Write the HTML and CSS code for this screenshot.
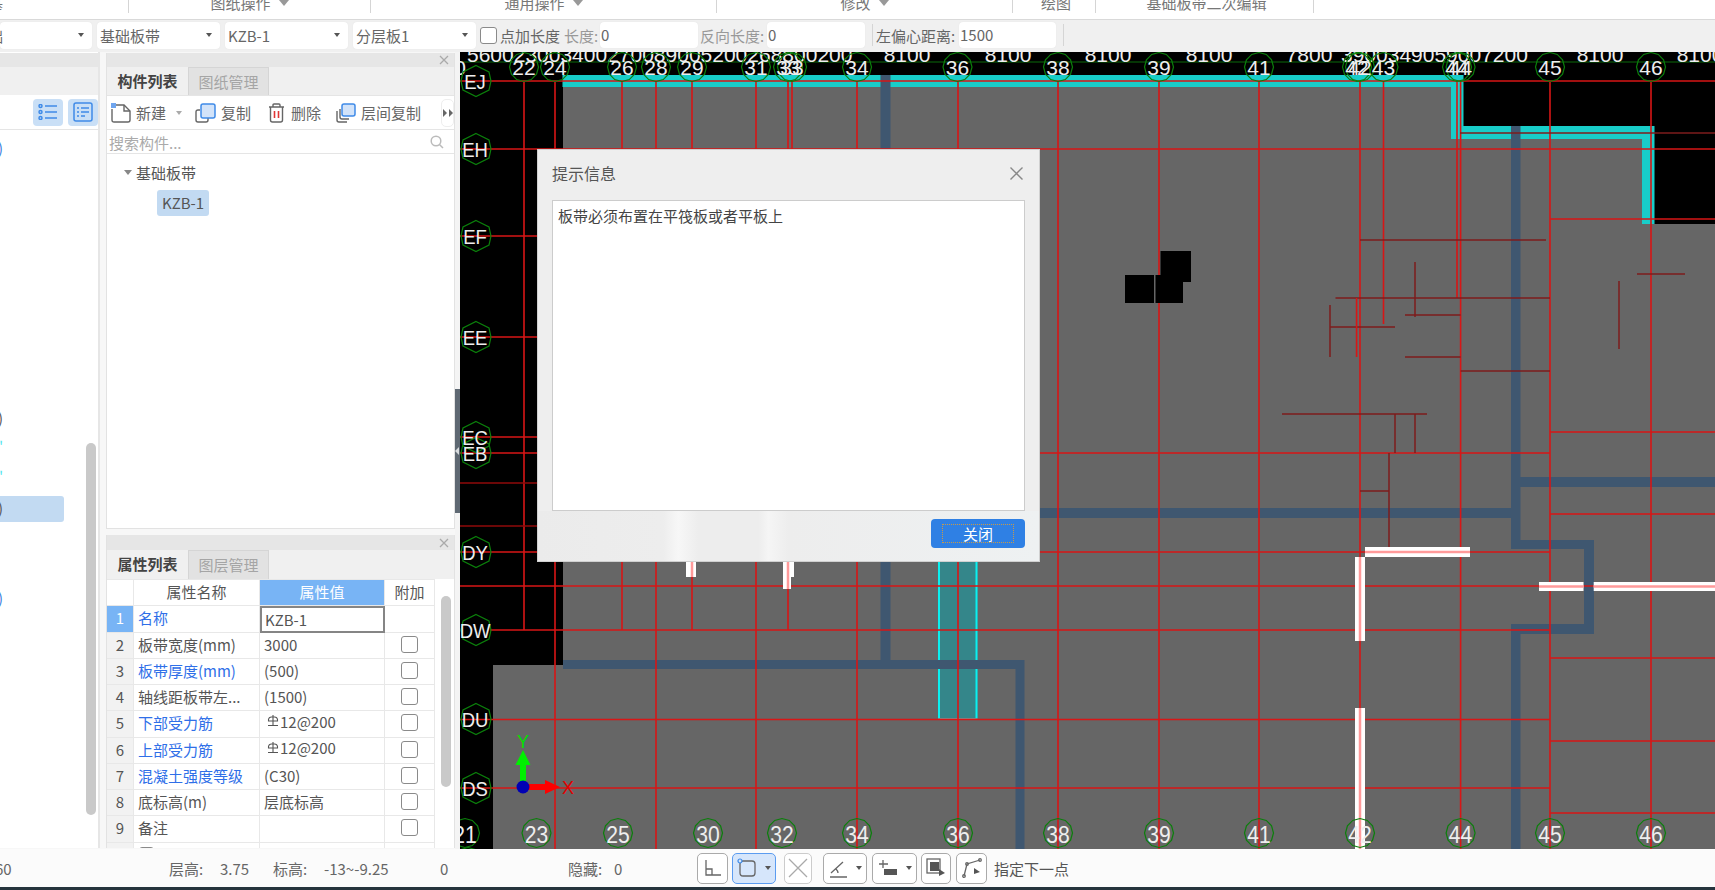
FILE: index.html
```html
<!DOCTYPE html>
<html lang="zh-CN">
<head>
<meta charset="utf-8">
<title>基础板带</title>
<link rel="stylesheet" href="styles.css">
</head>
<body>
<div class="app">
  <header class="ribbon">
    <div class="rb rb-1"><span class="rb-clip">基</span></div>
    <div class="rb rb-2"><span>图纸操作</span><i class="rb-tri"></i></div>
    <div class="rb rb-3"><span>通用操作</span><i class="rb-tri"></i></div>
    <div class="rb rb-4"><span>修改</span><i class="rb-tri"></i></div>
    <div class="rb rb-5"><span>绘图</span></div>
    <div class="rb rb-6"><span>基础板带二次编辑</span></div>
  </header>

  <div class="toolbar">
    <div class="sel sel-first"><span class="sel-clip">础</span><i class="tri"></i></div>
    <div class="sel"><span>基础板带</span><i class="tri"></i></div>
    <div class="sel"><span>KZB-1</span><i class="tri"></i></div>
    <div class="sel"><span>分层板1</span><i class="tri"></i></div>
    <span class="cb tb-cb"></span>
    <span class="tb-label tl-a">点加长度</span>
    <span class="tb-label muted tl-b">长度:</span>
    <div class="inp">0</div>
    <span class="tb-label muted tl-c">反向长度:</span>
    <div class="inp">0</div>
    <i class="tb-sep"></i>
    <span class="tb-label tl-d">左偏心距离:</span>
    <div class="inp inp-last">1500</div>
    <i class="tb-sep"></i>
  </div>

  <main class="main">
    <aside class="left">
      <div class="p-head"></div>
      <div class="p-tabs"></div>
      <div class="left-tools">
        <span class="view-btn">
          <svg width="20" height="16" viewBox="0 0 20 16"><g class="ic-blue"><circle cx="2.5" cy="2" r="1.5"/><circle cx="2.5" cy="8" r="1.5"/><circle cx="2.5" cy="14" r="1.5"/><path d="M7 2H19M7 8H19M7 14H19"/></g></svg>
        </span>
        <span class="view-btn">
          <svg width="20" height="20" viewBox="0 0 20 20"><g class="ic-blue"><rect x="1" y="1" width="18" height="18" rx="2"/><path d="M4 6H6M8 6H16M4 10H6M8 10H16M4 14H6M8 14H12"/></g></svg>
        </span>
      </div>
      <div class="left-list">
        <div class="lrow"><span class="frag frag-blue">)</span></div>
        <div class="lrow"></div><div class="lrow"></div><div class="lrow"></div><div class="lrow"></div>
        <div class="lrow"></div><div class="lrow"></div><div class="lrow"></div><div class="lrow"></div>
        <div class="lrow"><span class="frag">)</span></div>
        <div class="lrow"><span class="frag frag-cyan">'</span></div>
        <div class="lrow"><span class="frag frag-cyan">'</span></div>
        <div class="lrow lrow-sel"><span class="frag">)</span></div>
        <div class="lrow"></div><div class="lrow"></div>
        <div class="lrow"><span class="frag frag-blue">)</span></div>
      </div>
      <div class="left-scroll"></div>
    </aside>

    <section class="mid">
      <div class="panel panel-top">
        <div class="p-head"><svg class="p-x" width="10" height="10" viewBox="0 0 10 10"><path d="M1 1L9 9M9 1L1 9"/></svg></div>
        <div class="p-tabs">
          <span class="tab tab-on">构件列表</span>
          <span class="tab tab-off">图纸管理</span>
        </div>
        <div class="comp-tools">
          <span class="ct ct-new">
            <svg width="20" height="20" viewBox="0 0 20 20"><path class="ic-line" d="M5 2H13L19 8V17Q19 19 17 19H3Q1 19 1 17V6"/><path class="ic-line" d="M13 2V8H19"/><rect class="ic-fill" x="0" y="0" width="5" height="5"/></svg>
            <span>新建</span><i class="tri tri-light"></i>
          </span>
          <span class="ct ct-copy">
            <svg width="21" height="20" viewBox="0 0 21 20"><path class="ic-line" d="M5 7H3Q1 7 1 9V17Q1 19 3 19H11Q13 19 13 17V15"/><rect class="ic-sel" x="6" y="1" width="14" height="14" rx="2"/></svg>
            <span>复制</span>
          </span>
          <span class="ct ct-del">
            <svg width="17" height="20" viewBox="0 0 17 20"><path class="ic-line" d="M1 4H16M5 4V2Q5 1 6 1H11Q12 1 12 2V4M2.500 4V17Q2.500 19 4.500 19H12.500Q14.500 19 14.500 17V4"/><path class="ic-red" d="M6.500 8V15M10.500 8V15"/></svg>
            <span>删除</span>
          </span>
          <span class="ct ct-layer">
            <svg width="20" height="20" viewBox="0 0 20 20"><path class="ic-line" d="M1 8V17Q1 19 3 19H11M4 6V14Q4 16 6 16H13"/><rect class="ic-sel" x="6" y="1" width="13" height="12" rx="2"/></svg>
            <span>层间复制</span>
          </span>
          <span class="ct-more"><svg width="10" height="8" viewBox="0 0 10 8"><path d="M0 0L4 4L0 8ZM6 0L10 4L6 8Z"/></svg></span>
        </div>
        <div class="search">
          <span>搜索构件...</span>
          <svg width="14" height="14" viewBox="0 0 14 14"><circle class="ic-lite" cx="6" cy="6" r="4.800"/><path class="ic-lite" d="M9.500 9.500L13 13"/></svg>
        </div>
        <div class="tree">
          <div class="tree-root"><i class="tri tri-tree"></i><span>基础板带</span></div>
          <div class="tree-leaf">KZB-1</div>
        </div>
      </div>

      <div class="panel panel-bottom">
        <div class="p-head"><svg class="p-x" width="10" height="10" viewBox="0 0 10 10"><path d="M1 1L9 9M9 1L1 9"/></svg></div>
        <div class="p-tabs">
          <span class="tab tab-on">属性列表</span>
          <span class="tab tab-off">图层管理</span>
        </div>
        <div class="ptable">
          <div class="c c-h"></div><div class="c c-h">属性名称</div><div class="c c-h c-hv">属性值</div><div class="c c-h">附加</div>

          <div class="c c-n c-n-on">1</div><div class="c c-name link">名称</div><div class="c c-val c-edit">KZB-1</div><div class="c"></div>
          <div class="c c-n">2</div><div class="c c-name">板带宽度(mm)</div><div class="c c-val">3000</div><div class="c c-ck"><span class="cb"></span></div>
          <div class="c c-n">3</div><div class="c c-name link">板带厚度(mm)</div><div class="c c-val">(500)</div><div class="c c-ck"><span class="cb"></span></div>
          <div class="c c-n">4</div><div class="c c-name">轴线距板带左...</div><div class="c c-val">(1500)</div><div class="c c-ck"><span class="cb"></span></div>
          <div class="c c-n">5</div><div class="c c-name link">下部受力筋</div><div class="c c-val c-bar"><svg width="12" height="12" viewBox="0 0 12 12"><path d="M6 0V10M1 10.500H11M1.500 6V4.500A3 3 0 0 1 4.500 2H7.500A3 3 0 0 1 10.500 4.500V6Z"/></svg><span>12@200</span></div><div class="c c-ck"><span class="cb"></span></div>
          <div class="c c-n">6</div><div class="c c-name link">上部受力筋</div><div class="c c-val c-bar"><svg width="12" height="12" viewBox="0 0 12 12"><path d="M6 0V10M1 10.500H11M1.500 6V4.500A3 3 0 0 1 4.500 2H7.500A3 3 0 0 1 10.500 4.500V6Z"/></svg><span>12@200</span></div><div class="c c-ck"><span class="cb"></span></div>
          <div class="c c-n">7</div><div class="c c-name link">混凝土强度等级</div><div class="c c-val">(C30)</div><div class="c c-ck"><span class="cb"></span></div>
          <div class="c c-n">8</div><div class="c c-name">底标高(m)</div><div class="c c-val">层底标高</div><div class="c c-ck"><span class="cb"></span></div>
          <div class="c c-n">9</div><div class="c c-name">备注</div><div class="c c-val"></div><div class="c c-ck"><span class="cb"></span></div>
          <div class="c c-n"></div><div class="c c-name c-top"><span class="cb cb-small"></span></div><div class="c"></div><div class="c"></div>
        </div>
        <div class="p-scroll"></div>
      </div>
    </section>

    <div class="splitter"><span class="split-handle"><i></i></span></div>

    <section class="canvas">
      <svg class="cad" viewBox="460 52 1255 797" width="1255" height="797">
        <defs>
          <polygon id="c12" class="ring" points="14.500,0 12.560,7.250 7.250,12.560 0,14.500 -7.250,12.560 -12.560,7.250 -14.500,0 -12.560,-7.250 -7.250,-12.560 0,-14.500 7.250,-12.560 12.560,-7.250"/>
          <polygon id="hex" class="ring" points="0,-15.500 13,-9 15,0 13,9 0,15.500 -13,9 -15,0 -13,-9"/>
        </defs>

        <rect class="bk" x="460" y="52" width="1255" height="797"/>
        <path class="gray" d="M563 87H1451V139H1642V224H1715V849H493V665H563Z"/>

        <path class="cyan" d="M562.500 75H1463.500V126H1654.500V224H1642V139H1451V87H562.500Z"/>

        <path class="wall" d="M880.500 75H890.500V660H1024.500V849H1015.500V669H563V660H880.500Z"/>
        <path class="wall" d="M1511 126H1520.500V477H1715V487H1520.500V540H1594V634H1520.500V849H1511V624H1584V549H1511V518H1040V508H1511Z"/>

        <rect class="slab" x="938" y="540" width="39.500" height="120"/>
        <rect class="slab" x="938" y="669" width="39.500" height="50"/>
        <path class="slab-edge" d="M939 540V660M939 669V718M976.500 540V660M976.500 669V718"/>
        <path class="slab-foot" d="M938 719H977.500"/>

        <path class="red" d="M524 81V630M555 81V849M622 81V630M656 81V849M692 81V630M756 81V849M788 81V630M792 81V149M857 81V849M958 81V849M1058 81V849M1159 81V849M1259 81V849M1360 81V849M1383.500 81V324M1457 81V298M1460.600 81V849M1550 81V849M1651 81V849"/>
        <path class="red" d="M460 81H1715M460 149H1715M460 236H540M460 337H540M460 437H540M460 453H1550M460 552H1550M460 586H1715M490 630H1550M460 719.500H1550M460 788H1550M1550 219H1715M1550 432H1715M1550 514H1715M1550 658H1715M1550 741H1715M1550 813H1715"/>
        <path class="red-dim" d="M460 483H540M460 526H540"/>
        <path class="dim" d="M1360 240H1546M1335.500 298H1550M1415 262V317M1405 315H1460.600M1330 305V357M1330 327H1395M1405 357H1460.600M1460.600 371H1550M1282 414H1427M1395 414V453M1415 414V453M1389 453V552M1360 491H1389M1637 274H1685M1619 281V349M1460 133H1715"/>
        <path class="red" d="M1356.600 298V357"/>

        <path class="blk" d="M1160.500 251H1191V282H1183V303H1155.500V275H1160.500ZM1125 275H1154V303H1125Z"/>

        <path class="white" d="M1365 547H1470V557H1365ZM1355 557H1365V641H1355ZM1355 708H1365V849H1355ZM1539 582H1583.500V591H1539ZM1593.700 582H1715V591H1593.700ZM686 560H696V577H686ZM783 560H794V577H791V589H783Z"/>
        <path class="pink" d="M1365 552H1470M1360 557V641M1360 708V849M1539 586.500H1583.500M1593.700 586.500H1715M692 560V577M788 560V589"/>

        <path class="dimline" d="M460 62H1715"/>
        <text class="t dimt" x="467" y="61.500">560023003400270089005200268800200</text>
        <text class="t dimt mid-a" x="907" y="61.500">8100</text>
        <text class="t dimt mid-a" x="1008" y="61.500">8100</text>
        <text class="t dimt mid-a" x="1108" y="61.500">8100</text>
        <text class="t dimt mid-a" x="1209" y="61.500">8100</text>
        <text class="t dimt mid-a" x="1309" y="61.500">7800</text>
        <text class="t dimt" x="1341" y="61.500">3900349059007200</text>
        <text class="t dimt mid-a" x="1600" y="61.500">8100</text>
        <text class="t dimt mid-a" x="1700" y="61.500">8100</text>

        <use href="#c12" x="524" y="67"/><use href="#c12" x="555" y="67"/><use href="#c12" x="622" y="67"/><use href="#c12" x="656" y="67"/><use href="#c12" x="692" y="67"/><use href="#c12" x="756" y="67"/><use href="#c12" x="788" y="67"/><use href="#c12" x="792" y="67"/><use href="#c12" x="857" y="67"/><use href="#c12" x="957.500" y="67"/><use href="#c12" x="1058" y="67"/><use href="#c12" x="1159" y="67"/><use href="#c12" x="1259" y="67"/><use href="#c12" x="1357" y="67"/><use href="#c12" x="1360" y="67"/><use href="#c12" x="1383.500" y="67"/><use href="#c12" x="1457" y="67"/><use href="#c12" x="1460.600" y="67"/><use href="#c12" x="1550" y="67"/><use href="#c12" x="1651" y="67"/>
        <g class="t axt">
          <text x="460" y="74.500">0</text><text x="524" y="75">22</text><text x="555" y="75">24</text><text x="622" y="75">26</text><text x="656" y="75">28</text><text x="692" y="75">29</text><text x="756" y="75">31</text><text x="788" y="75">33</text><text x="792" y="75">33</text><text x="857" y="75">34</text><text x="957.500" y="75">36</text><text x="1058" y="75">38</text><text x="1159" y="75">39</text><text x="1259" y="75">41</text><text x="1357" y="75">42</text><text x="1360" y="75">42</text><text x="1383.500" y="75">43</text><text x="1457" y="75">44</text><text x="1460.600" y="75">44</text><text x="1550" y="75">45</text><text x="1651" y="75">46</text>
        </g>

        <use href="#hex" x="476" y="81"/><use href="#hex" x="476" y="149"/><use href="#hex" x="476" y="236"/><use href="#hex" x="476" y="337"/><use href="#hex" x="476" y="437"/><use href="#hex" x="476" y="453"/><use href="#hex" x="476" y="552"/><use href="#hex" x="476" y="630"/><use href="#hex" x="476" y="719"/><use href="#hex" x="476" y="788"/>
        <g class="t axl">
          <text x="475" y="89">EJ</text><text x="475" y="157">EH</text><text x="475" y="244">EF</text><text x="475" y="345">EE</text><text x="475" y="445">EC</text><text x="475" y="461">EB</text><text x="475" y="560">DY</text><text x="475" y="638">DW</text><text x="475" y="727">DU</text><text x="475" y="796">DS</text>
        </g>

        <use href="#c12" x="465" y="833"/><use href="#c12" x="536.500" y="833"/><use href="#c12" x="618" y="833"/><use href="#c12" x="708" y="833"/><use href="#c12" x="782" y="833"/><use href="#c12" x="857" y="833"/><use href="#c12" x="958" y="833"/><use href="#c12" x="1058" y="833"/><use href="#c12" x="1159" y="833"/><use href="#c12" x="1259" y="833"/><use href="#c12" x="1360" y="833"/><use href="#c12" x="1460.600" y="833"/><use href="#c12" x="1550" y="833"/><use href="#c12" x="1651" y="833"/><use href="#c12" x="468" y="862"/>
        <g class="t axb">
          <text x="465" y="843">21</text><text x="536.500" y="843">23</text><text x="618" y="843">25</text><text x="708" y="843">30</text><text x="782" y="843">32</text><text x="857" y="843">34</text><text x="958" y="843">36</text><text x="1058" y="843">38</text><text x="1159" y="843">39</text><text x="1259" y="843">41</text><text x="1360" y="843">42</text><text x="1460.600" y="843">44</text><text x="1550" y="843">45</text><text x="1651" y="843">46</text>
        </g>

        <path class="g-green" d="M520 787V765H515.500L523 750L530.500 765H526V787Z"/>
        <path class="g-red" d="M523 784H545V780L560 787L545 794V790H523Z"/>
        <circle class="g-blue" cx="523" cy="787" r="6.500"/>
        <text class="t g-y" x="523" y="748">Y</text>
        <text class="t g-x" x="568" y="794">X</text>
      </svg>

      <div class="dialog">
        <div class="dlg-title">
          <span>提示信息</span>
          <svg width="15" height="15" viewBox="0 0 15 15"><path d="M1.500 1.500L13.500 13.500M13.500 1.500L1.500 13.500"/></svg>
        </div>
        <div class="dlg-box">板带必须布置在平筏板或者平板上</div>
        <div class="dlg-foot">
          <button class="dlg-btn" type="button"><span>关闭</span></button>
        </div>
      </div>
    </section>
  </main>

  <footer class="status">
    <span class="st st-0"><span class="st-clip">60</span></span>
    <span class="st st-1">层高:</span>
    <span class="st st-2">3.75</span>
    <span class="st st-1">标高:</span>
    <span class="st st-3">-13~-9.25</span>
    <span class="st st-4">0</span>
    <span class="st st-5">隐藏:</span>
    <span class="st st-6">0</span>
    <span class="sb sb-1"><svg width="18" height="18" viewBox="0 0 18 18"><path class="ic-dark" d="M2 1V16H17M2 10H8V16"/></svg></span>
    <span class="sb sb-2"><svg class="sb-ic" width="20" height="20" viewBox="0 0 20 20"><rect class="ic-dark" x="3" y="3" width="15" height="15" rx="3"/><circle class="ic-dot" cx="3" cy="3" r="2"/></svg><i class="tri tri-dark"></i></span>
    <span class="sb sb-3"><svg width="20" height="20" viewBox="0 0 20 20"><path class="ic-soft" d="M1 1L19 19M19 1L1 19"/></svg></span>
    <span class="sb sb-4"><svg width="20" height="20" viewBox="0 0 20 20"><path class="ic-dark" d="M3 15L15 4M2 19H19M8 11Q10 13 10 15"/></svg><i class="tri tri-dark"></i></span>
    <span class="sb sb-5"><svg width="20" height="18" viewBox="0 0 20 18"><path class="ic-dark" d="M1 5H10M5 1V9"/><rect class="ic-solid" x="6" y="10" width="13" height="6"/></svg><i class="tri tri-dark"></i></span>
    <span class="sb sb-6"><svg width="20" height="20" viewBox="0 0 20 20"><rect class="ic-dark" x="1" y="1" width="13" height="14"/><rect class="ic-solid" x="4" y="4" width="9" height="9"/><path class="ic-solid" d="M13 11L19 15L13 18Z"/></svg></span>
    <span class="sb sb-7"><svg width="20" height="20" viewBox="0 0 20 20"><path class="ic-dark" d="M2 18L5 6L18 2"/><circle class="ic-dark" cx="2" cy="18" r="1.300"/><circle class="ic-dark" cx="5" cy="6" r="1.300"/><circle class="ic-dark" cx="18" cy="2" r="1.300"/><path class="ic-solid" d="M12 10L18 14L12 16Z"/></svg></span>
    <span class="st st-hint">指定下一点</span>
  </footer>
  <div class="taskbar"></div>
</div>
</body>
</html>
```

FILE: styles.css
```css
* { box-sizing: border-box; }
html, body { margin: 0; height: 100%; overflow: hidden; }
body {
  font-family: "Noto Sans CJK SC", "Noto Sans", sans-serif;
  font-size: 15px;
  color: #555;
  background: #f0f0f0;
}
i { display: block; font-style: normal; }

.app { width: 1715px; height: 890px; display: flex; flex-direction: column; overflow: hidden; }

/* ribbon */
.ribbon { height: 20px; flex: none; display: flex; background: #fff; border-bottom: 1px solid #d9d9d9; }
.rb {
  height: 13px; flex: none; display: flex; justify-content: center; gap: 8px;
  line-height: 6px; color: #777; border-right: 1px solid #d5d5d5;
}
.rb-1 { width: 129px; justify-content: flex-start; }
.rb-clip { margin-left: -12px; }
.rb-2 { width: 242px; }
.rb-3 { width: 346px; }
.rb-4 { width: 296px; }
.rb-5 { width: 83px; padding-left: 4px; }
.rb-6 { width: 218px; padding-left: 4px; }
.rb-tri { width: 0; height: 0; margin-top: 0; border: 5px solid transparent; border-top: 6px solid #999; border-bottom: 0; }

/* toolbar */
.toolbar { height: 32px; flex: none; display: flex; align-items: center; background: #f0f0f0; padding-bottom: 2px; }
.sel {
  width: 123px; height: 27px; margin-left: 5px; padding: 0 8px 0 3px; flex: none; overflow: hidden;
  display: flex; align-items: center; justify-content: space-between;
  background: #fff; border-radius: 4px; color: #666; box-shadow: 0 0 1px #ddd;
}
.sel-first { width: 92px; margin-left: 0; padding-left: 0; }
.sel-clip { margin-left: -12px; }
.tri { width: 0; height: 0; border: 3.5px solid transparent; border-top: 4px solid #555; border-bottom: 0; }
.cb {
  display: block; width: 17px; height: 17px; flex: none; background: #fff;
  border: 1.5px solid #8a8a8a; border-radius: 3px;
}
.tb-cb { margin-left: 4px; }
.tb-label { flex: none; white-space: nowrap; color: #666; }
.muted { color: #999; }
.tl-a { margin-left: 3px; width: 59px; }
.tl-b { margin-left: 5px; width: 36px; }
.tl-c { margin-left: 2px; width: 67px; }
.tl-d { margin-left: 3px; width: 83px; }
.inp {
  width: 98px; height: 26px; flex: none; padding: 0 1px; line-height: 26px;
  background: #fff; border-radius: 4px; color: #666; box-shadow: 0 0 1px #ddd;
}
.inp-last { width: 97px; }
.tb-sep { width: 1px; height: 22px; margin-left: 7px; background: #d5d5d5; flex: none; }

/* main */
.main { height: 797px; flex: none; display: flex; background: #f7f7f7; }

.left { width: 100px; flex: none; position: relative; padding-top: 1px; background: #fff; border-right: 2px solid #e6e6e6; height: 796px; overflow: hidden; }
.p-head { height: 14px; position: relative; background: #e6e6e6; }
.p-x { position: absolute; right: 5px; top: 2px; fill: none; stroke: #aaa; stroke-width: 1.300; }
.p-tabs { height: 28px; display: flex; background: #f0f0f0; }
.left-tools { height: 35px; display: flex; align-items: center; justify-content: flex-end; gap: 5px; padding-right: 0; background: #fff; border-bottom: 1px solid #e5e5e5; }
.view-btn { width: 30px; height: 27px; display: flex; align-items: center; justify-content: center; background: #c9dff6; border-radius: 4px; }
.ic-blue { fill: none; stroke: #3f8be8; stroke-width: 1.500; }
.left-list { display: flex; flex-direction: column; gap: 4px; padding-top: 6px; }
.lrow { width: 64px; height: 26px; line-height: 24px; border-radius: 0 3px 3px 0; flex: none; }
.lrow-sel { background: #c2daf2; }
.frag { display: block; margin-left: -2px; color: #555; }
.frag-blue { color: #3d7fe0; }
.frag-cyan { color: #59e6f0; margin-left: -1px; }
.left-scroll { position: absolute; left: 86px; top: 391px; width: 10px; height: 372px; background: #c9c9c9; border-radius: 5px; }

.mid { width: 349px; margin-left: 6px; flex: none; display: flex; flex-direction: column; gap: 6px; padding: 1px 0 1px; }
.panel { position: relative; flex: none; background: #fff; border: 1px solid #e2e2e2; overflow: hidden; }
.panel-top { height: 476px; border-top: 0; }
.panel-bottom { flex: 1; border-top: 0; border-bottom: 0; }
.panel-bottom .p-head { height: 15px; }
.panel-bottom .p-x { top: 3px; }
.panel-bottom .p-tabs { height: 29px; }
.tab { width: 81px; text-align: center; line-height: 27px; flex: none; }
.tab-on { font-weight: 700; color: #444; }
.tab-off { background: #e2e2e2; color: #a5a5a5; border: 1px solid #d5d5d5; border-bottom: 0; }

.comp-tools { height: 35px; display: flex; align-items: center; background: #fff; border-top: 1px solid #e5e5e5; border-bottom: 1px solid #e5e5e5; }
.ct { display: flex; align-items: center; flex: none; color: #666; white-space: nowrap; }
.ct-new { margin-left: 4px; gap: 5px; width: 84px; }
.ct-new .tri { margin-left: 5px; }
.tri-light { border-top-color: #aaa; }
.ct-copy { width: 73px; gap: 5px; }
.ct-del { width: 68px; gap: 6px; }
.ct-layer { width: 105px; gap: 5px; }
.ct-more {
  width: 13px; height: 28px; display: flex; align-items: center; justify-content: center;
  background: #fff; border: 1px solid #eee; border-radius: 5px; flex: none;
}
.ct-more svg { fill: #666; }
.ic-line { fill: none; stroke: #666; stroke-width: 1.400; }
.ic-fill { fill: #6fa5ee; }
.ic-sel { fill: #d2e3f9; stroke: #3f8be8; stroke-width: 1.500; }
.ic-red { fill: none; stroke: #e03535; stroke-width: 1.600; }
.ic-lite { fill: none; stroke: #bbb; stroke-width: 1.500; }

.search { height: 24px; display: flex; align-items: center; justify-content: space-between; padding: 1px 10px 0 2px; color: #aaa; border-bottom: 1px solid #e5e5e5; }
.tree { padding: 5px 0 0 17px; }
.tree-root { display: flex; align-items: center; gap: 4px; height: 26px; color: #555; margin-left: 0; }
.tri-tree { border-top-color: #888; border-width: 4px; border-top-width: 5px; border-bottom: 0; }
.tree-leaf { width: 52px; height: 26px; margin: 5px 0 0 33px; line-height: 26px; text-align: center; background: #c2daf2; border-radius: 3px; color: #555; }

.ptable {
  display: grid; width: 328px; grid-template-columns: 27px 126px 125px 50px; grid-auto-rows: 26.250px;
  border-top: 1px solid #e8e8e8;
}
.c {
  display: flex; align-items: center; overflow: hidden; white-space: nowrap; padding-bottom: 2px;
  border-right: 1.500px solid #e8e8e8; border-bottom: 1.500px solid #e8e8e8; color: #555; background: #fff;
}
.c-h { justify-content: center; }
.c-hv { background: #78b4f5; color: #fff; }
.c-n { justify-content: center; background: #f2f2f2; }
.c-n-on { background: #78b4f5; color: #fff; }
.c-name { padding-left: 4px; }
.c-val { padding-left: 4px; }
.c-edit { border: 2px solid #858585; padding-left: 3px; padding-bottom: 0; }
.link { color: #2f6fe8; }
.c-ck { justify-content: center; }
.c-bar { gap: 1px; padding-left: 7px; padding-bottom: 5px; }
.c-bar svg { fill: none; stroke: #555; stroke-width: 1.100; flex: none; }
.c-top { align-items: flex-start; padding-top: 4px; }
.cb-small { width: 15px; height: 15px; margin-left: 1px; }
.p-scroll { position: absolute; left: 334px; top: 61px; width: 10px; height: 191px; background: #c9c9c9; border-radius: 5px; }

.splitter { width: 5px; flex: none; display: flex; align-items: center; background: #f4f4f4; }
.split-handle { width: 5px; height: 124px; display: flex; align-items: center; background: #5f6973; }
.split-handle i { width: 0; height: 0; border: 4px solid transparent; border-right: 4px solid #d8dbde; border-left: 0; }

/* canvas */
.canvas { position: relative; flex: 1; min-width: 0; overflow: hidden; background: #000; }
.cad { display: block; }
.bk, .blk { fill: #000; }
.gray { fill: #666; }
.cyan { fill: #18cdc9; }
.wall { fill: #3f5770; }
.slab { fill: #34868a; }
.slab-edge { fill: none; stroke: #0af0f0; stroke-width: 2; }
.slab-foot { fill: none; stroke: #8f9a9a; stroke-width: 1.500; }
.red { fill: none; stroke: #d81616; stroke-width: 1.600; }
.red-dim { fill: none; stroke: #8f0a0a; stroke-width: 1.300; }
.dim { fill: none; stroke: #7d1c1c; stroke-width: 1.500; }
.white { fill: #fff; }
.pink { fill: none; stroke: #ff9a9a; stroke-width: 2.500; }
.dimline { fill: none; stroke: #0b6a0b; stroke-width: 1; }
.ring { fill: none; stroke: #0b7f0b; stroke-width: 1.200; }
.t { font-family: "Liberation Sans", sans-serif; }
.dimt { font-size: 21px; fill: #eee; }
.mid-a { text-anchor: middle; }
.axt { font-size: 21px; fill: #eee; text-anchor: middle; }
.axl { font-size: 21px; fill: #eee; text-anchor: middle; }
.axl text, .axb text { transform-box: fill-box; transform-origin: center; transform: scaleX(.88); }
.axb { font-size: 24px; fill: #eee; text-anchor: middle; }
.g-green { fill: #00f000; }
.g-red { fill: #f00; }
.g-blue { fill: #0000b4; }
.g-y { font-size: 18px; fill: #00e000; text-anchor: middle; }
.g-x { font-size: 18px; fill: #e00000; text-anchor: middle; }

/* dialog */
.dialog {
  position: absolute; left: 77px; top: 97px; width: 503px; height: 413px;
  display: flex; flex-direction: column; background: #eee; border: 1px solid #d0d0d0;
}
.dlg-title { height: 50px; flex: none; display: flex; align-items: center; justify-content: space-between; padding: 0 15px 4px 14px; font-size: 16px; color: #555; }
.dlg-title svg { fill: none; stroke: #888; stroke-width: 1.400; }
.dlg-box { height: 311px; flex: none; margin: 0 14px 0 14px; padding: 4px 5px; background: #fff; border: 1px solid #ccc; color: #444; }
.dlg-foot {
  flex: 1; display: flex; justify-content: flex-end; align-items: flex-start; padding: 8px 14px 0 0;
  background: linear-gradient(90deg, #ebebeb 0, #ededed 25%, #f7f7f7 28%, #ededed 32%, #ededed 44%, #f5f5f5 46%, #ededed 50%, #eef1f2 100%);
}
.dlg-btn { width: 94px; height: 29px; padding: 5px 11px; background: #2f80e4; border: 0; border-radius: 4px; font: inherit; color: #fff; }
.dlg-btn span { display: flex; height: 100%; align-items: center; justify-content: center; border: 1px dotted #c79a4a; }

/* status bar */
.status { height: 38px; flex: none; display: flex; align-items: center; background: #fbfbfb; }
.st { flex: none; white-space: nowrap; color: #666; }
.st-0 { width: 169px; }
.st-clip { margin-left: -5px; display: block; }
.st-1 { width: 51px; }
.st-2 { width: 53px; }
.st-3 { width: 116px; }
.st-4 { width: 128px; }
.st-5 { width: 46px; }
.st-6 { width: 83px; }
.st-hint { margin-left: 7px; color: #555; }
.sb {
  height: 31px; flex: none; display: flex; align-items: center; justify-content: center; gap: 8px;
  background: #fff; border: 1.500px solid #aaa; border-radius: 5px;
}
.sb-1 { width: 31px; }
.sb-2 { width: 44px; margin-left: 4px; background: #d6e6fb; border-color: #5b9cf0; }
.sb-3 { width: 28px; margin-left: 8px; border-color: #ccc; }
.sb-4 { width: 44px; margin-left: 11px; }
.sb-5 { width: 45px; margin-left: 5px; }
.sb-6 { width: 30px; margin-left: 4px; }
.sb-7 { width: 31px; margin-left: 5px; }
.ic-dark { fill: none; stroke: #666; stroke-width: 1.300; }
.ic-soft { fill: none; stroke: #aaa; stroke-width: 1.300; }
.ic-dot { fill: #d6e6fb; stroke: #3f8be8; stroke-width: 1.200; }
.ic-solid { fill: #555; }
.tri-dark { border-top-color: #555; }

.taskbar { flex: 1; background: #25343d; }
```
